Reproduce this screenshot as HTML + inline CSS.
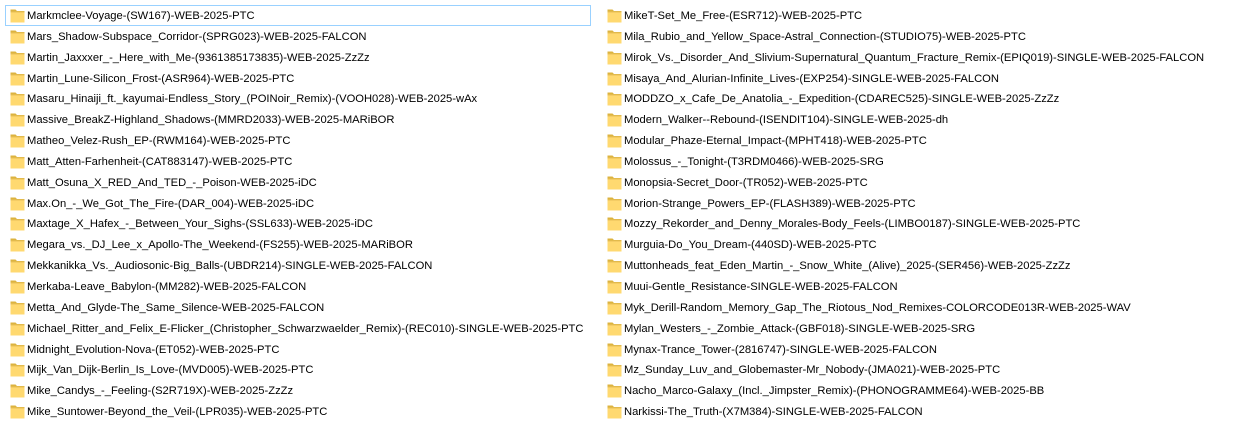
<!DOCTYPE html>
<html><head><meta charset="utf-8"><style>
body{margin:0;width:1240px;height:435px;background:#fff;overflow:hidden;font-family:"Liberation Sans",sans-serif;font-size:11.2px;color:#000;position:relative}
.col{position:absolute;top:5px}
.r{height:20.85px;line-height:20px;position:relative;white-space:nowrap;box-sizing:border-box}
.r svg{position:absolute;left:5px;top:3px}
.r span{position:absolute;left:22px;top:1px}
.sel{border:1px solid #99d1ff}
.sel svg{left:4px;top:2px}.sel span{left:21px;top:0}
</style></head><body>
<svg width="0" height="0" style="position:absolute"><defs><g id="f"><path d="M0.5 1.5h5l1.5 1.5h7.5v11.5h-14z" fill="#dcb33f"/><path d="M0.5 4h14v10.5h-14z" fill="#ffd970"/><path d="M0.5 4h14" stroke="#e8c058" stroke-width="1"/></g></defs></svg>
<div class="col" style="left:5px;width:586px">
<div class="r sel"><svg width="15" height="15"><use href="#f"/></svg><span>Markmclee-Voyage-(SW167)-WEB-2025-PTC</span></div>
<div class="r"><svg width="15" height="15"><use href="#f"/></svg><span>Mars_Shadow-Subspace_Corridor-(SPRG023)-WEB-2025-FALCON</span></div>
<div class="r"><svg width="15" height="15"><use href="#f"/></svg><span>Martin_Jaxxxer_-_Here_with_Me-(9361385173835)-WEB-2025-ZzZz</span></div>
<div class="r"><svg width="15" height="15"><use href="#f"/></svg><span>Martin_Lune-Silicon_Frost-(ASR964)-WEB-2025-PTC</span></div>
<div class="r"><svg width="15" height="15"><use href="#f"/></svg><span>Masaru_Hinaiji_ft._kayumai-Endless_Story_(POINoir_Remix)-(VOOH028)-WEB-2025-wAx</span></div>
<div class="r"><svg width="15" height="15"><use href="#f"/></svg><span>Massive_BreakZ-Highland_Shadows-(MMRD2033)-WEB-2025-MARiBOR</span></div>
<div class="r"><svg width="15" height="15"><use href="#f"/></svg><span>Matheo_Velez-Rush_EP-(RWM164)-WEB-2025-PTC</span></div>
<div class="r"><svg width="15" height="15"><use href="#f"/></svg><span>Matt_Atten-Farhenheit-(CAT883147)-WEB-2025-PTC</span></div>
<div class="r"><svg width="15" height="15"><use href="#f"/></svg><span>Matt_Osuna_X_RED_And_TED_-_Poison-WEB-2025-iDC</span></div>
<div class="r"><svg width="15" height="15"><use href="#f"/></svg><span>Max.On_-_We_Got_The_Fire-(DAR_004)-WEB-2025-iDC</span></div>
<div class="r"><svg width="15" height="15"><use href="#f"/></svg><span>Maxtage_X_Hafex_-_Between_Your_Sighs-(SSL633)-WEB-2025-iDC</span></div>
<div class="r"><svg width="15" height="15"><use href="#f"/></svg><span>Megara_vs._DJ_Lee_x_Apollo-The_Weekend-(FS255)-WEB-2025-MARiBOR</span></div>
<div class="r"><svg width="15" height="15"><use href="#f"/></svg><span>Mekkanikka_Vs._Audiosonic-Big_Balls-(UBDR214)-SINGLE-WEB-2025-FALCON</span></div>
<div class="r"><svg width="15" height="15"><use href="#f"/></svg><span>Merkaba-Leave_Babylon-(MM282)-WEB-2025-FALCON</span></div>
<div class="r"><svg width="15" height="15"><use href="#f"/></svg><span>Metta_And_Glyde-The_Same_Silence-WEB-2025-FALCON</span></div>
<div class="r"><svg width="15" height="15"><use href="#f"/></svg><span>Michael_Ritter_and_Felix_E-Flicker_(Christopher_Schwarzwaelder_Remix)-(REC010)-SINGLE-WEB-2025-PTC</span></div>
<div class="r"><svg width="15" height="15"><use href="#f"/></svg><span>Midnight_Evolution-Nova-(ET052)-WEB-2025-PTC</span></div>
<div class="r"><svg width="15" height="15"><use href="#f"/></svg><span>Mijk_Van_Dijk-Berlin_Is_Love-(MVD005)-WEB-2025-PTC</span></div>
<div class="r"><svg width="15" height="15"><use href="#f"/></svg><span>Mike_Candys_-_Feeling-(S2R719X)-WEB-2025-ZzZz</span></div>
<div class="r"><svg width="15" height="15"><use href="#f"/></svg><span>Mike_Suntower-Beyond_the_Veil-(LPR035)-WEB-2025-PTC</span></div>
</div>
<div class="col" style="left:602px;width:630px">
<div class="r"><svg width="15" height="15"><use href="#f"/></svg><span>MikeT-Set_Me_Free-(ESR712)-WEB-2025-PTC</span></div>
<div class="r"><svg width="15" height="15"><use href="#f"/></svg><span>Mila_Rubio_and_Yellow_Space-Astral_Connection-(STUDIO75)-WEB-2025-PTC</span></div>
<div class="r"><svg width="15" height="15"><use href="#f"/></svg><span>Mirok_Vs._Disorder_And_Slivium-Supernatural_Quantum_Fracture_Remix-(EPIQ019)-SINGLE-WEB-2025-FALCON</span></div>
<div class="r"><svg width="15" height="15"><use href="#f"/></svg><span>Misaya_And_Alurian-Infinite_Lives-(EXP254)-SINGLE-WEB-2025-FALCON</span></div>
<div class="r"><svg width="15" height="15"><use href="#f"/></svg><span>MODDZO_x_Cafe_De_Anatolia_-_Expedition-(CDAREC525)-SINGLE-WEB-2025-ZzZz</span></div>
<div class="r"><svg width="15" height="15"><use href="#f"/></svg><span>Modern_Walker--Rebound-(ISENDIT104)-SINGLE-WEB-2025-dh</span></div>
<div class="r"><svg width="15" height="15"><use href="#f"/></svg><span>Modular_Phaze-Eternal_Impact-(MPHT418)-WEB-2025-PTC</span></div>
<div class="r"><svg width="15" height="15"><use href="#f"/></svg><span>Molossus_-_Tonight-(T3RDM0466)-WEB-2025-SRG</span></div>
<div class="r"><svg width="15" height="15"><use href="#f"/></svg><span>Monopsia-Secret_Door-(TR052)-WEB-2025-PTC</span></div>
<div class="r"><svg width="15" height="15"><use href="#f"/></svg><span>Morion-Strange_Powers_EP-(FLASH389)-WEB-2025-PTC</span></div>
<div class="r"><svg width="15" height="15"><use href="#f"/></svg><span>Mozzy_Rekorder_and_Denny_Morales-Body_Feels-(LIMBO0187)-SINGLE-WEB-2025-PTC</span></div>
<div class="r"><svg width="15" height="15"><use href="#f"/></svg><span>Murguia-Do_You_Dream-(440SD)-WEB-2025-PTC</span></div>
<div class="r"><svg width="15" height="15"><use href="#f"/></svg><span>Muttonheads_feat_Eden_Martin_-_Snow_White_(Alive)_2025-(SER456)-WEB-2025-ZzZz</span></div>
<div class="r"><svg width="15" height="15"><use href="#f"/></svg><span>Muui-Gentle_Resistance-SINGLE-WEB-2025-FALCON</span></div>
<div class="r"><svg width="15" height="15"><use href="#f"/></svg><span>Myk_Derill-Random_Memory_Gap_The_Riotous_Nod_Remixes-COLORCODE013R-WEB-2025-WAV</span></div>
<div class="r"><svg width="15" height="15"><use href="#f"/></svg><span>Mylan_Westers_-_Zombie_Attack-(GBF018)-SINGLE-WEB-2025-SRG</span></div>
<div class="r"><svg width="15" height="15"><use href="#f"/></svg><span>Mynax-Trance_Tower-(2816747)-SINGLE-WEB-2025-FALCON</span></div>
<div class="r"><svg width="15" height="15"><use href="#f"/></svg><span>Mz_Sunday_Luv_and_Globemaster-Mr_Nobody-(JMA021)-WEB-2025-PTC</span></div>
<div class="r"><svg width="15" height="15"><use href="#f"/></svg><span>Nacho_Marco-Galaxy_(Incl._Jimpster_Remix)-(PHONOGRAMME64)-WEB-2025-BB</span></div>
<div class="r"><svg width="15" height="15"><use href="#f"/></svg><span>Narkissi-The_Truth-(X7M384)-SINGLE-WEB-2025-FALCON</span></div>
</div>
</body></html>
